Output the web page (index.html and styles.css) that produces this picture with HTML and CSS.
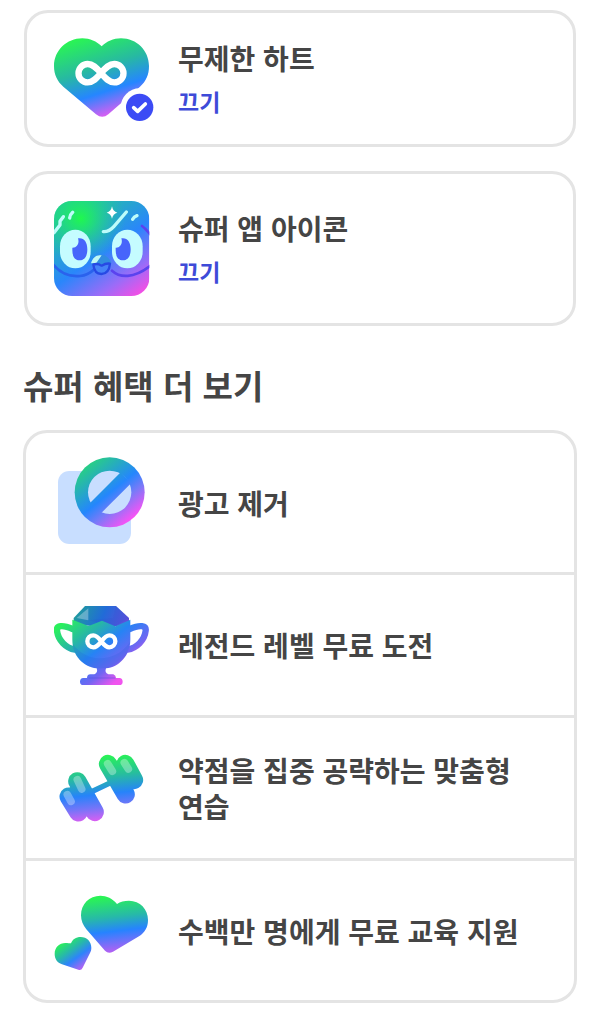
FILE: index.html
```html
<!DOCTYPE html>
<html lang="ko">
<head>
<meta charset="utf-8">
<meta name="viewport" content="width=device-width, initial-scale=1">
<title>슈퍼 혜택</title>
<link rel="stylesheet" href="styles.css">
</head>
<body>
<main class="page">
  <section class="card card--compact">
    <svg class="icon" width="100" height="91" viewBox="42 25 300 273" aria-hidden="true">
      <defs>
        <linearGradient id="heart" gradientUnits="userSpaceOnUse" x1="100" y1="50" x2="175" y2="285">
          <stop offset="0" stop-color="#2af356"/><stop offset=".4" stop-color="#27b9a2"/><stop offset=".7" stop-color="#2586ff"/><stop offset="1" stop-color="#e35cf2"/>
        </linearGradient>
      </defs>
      <path fill="url(#heart)" d="M185 65C170 50 150 41 127 41C80 41 42 78 42 124C42 150 52 170 70 186L168 269Q187 284 205 269L300 186C318 170 327 150 327 124C327 78 290 41 243 41C220 41 200 50 185 65Z"/>
      <path fill="none" stroke="#fff" stroke-width="19" d="M183 145C168 128 158 118 143 118A27.5 27.5 0 0 0 143 173C158 173 168 163 183 145C198 128 208 118 223 118A27.5 27.5 0 0 1 223 173C208 173 198 163 183 145Z"/>
      <circle cx="299" cy="248" r="57" fill="#fff"/>
      <circle cx="299" cy="248" r="41" fill="#3c4bf5"/>
      <path fill="none" stroke="#fff" stroke-width="11" stroke-linecap="round" stroke-linejoin="round" d="M281 249L293 260L316 238"/>
    </svg>
    <div class="card-body">
      <h2 class="title title--card">무제한 하트</h2>
      <button class="toggle" type="button">끄기</button>
    </div>
  </section>

  <section class="card">
    <svg class="icon" width="100" height="97" viewBox="42 30 300 291" aria-hidden="true">
      <defs>
        <linearGradient id="face" gradientUnits="userSpaceOnUse" x1="95" y1="45" x2="290" y2="330">
          <stop offset="0" stop-color="#22c99b"/><stop offset=".5" stop-color="#2a86fb"/><stop offset=".78" stop-color="#9a6cf8"/><stop offset="1" stop-color="#ff4be2"/>
        </linearGradient>
        <radialGradient id="glow" gradientUnits="userSpaceOnUse" cx="122" cy="85" r="135">
          <stop offset="0" stop-color="#1ff84e"/><stop offset=".3" stop-color="#20ee62" stop-opacity=".7"/><stop offset="1" stop-color="#22c99b" stop-opacity="0"/>
        </radialGradient>
        <clipPath id="tile"><rect x="42" y="33" width="286" height="285" rx="54"/></clipPath>
      </defs>
      <g clip-path="url(#tile)">
        <path fill="url(#face)" d="M42 33H328V318H42Z"/>
        <path fill="url(#glow)" d="M42 33H328V318H42Z"/>
        <g fill="none" stroke-width="8" stroke-linecap="round">
          <path stroke="#2a62ed" d="M38 222C60 250 88 261 120 258C140 256 152 248 160 240"/>
          <path stroke="#5b43ee" d="M216 242C240 264 280 266 330 228M306 108C316 115 322 123 330 132"/>
        </g>
        <g fill="none" stroke="#bdfcfa" stroke-width="10" stroke-linecap="round" stroke-linejoin="round">
          <path d="M42 128L60 105L60 94L70 80M89 84Q90 74 98 67M190 125C204 126 214 118 222 109L259 66M278 88Q282 80 291 77"/>
        </g>
        <path fill="#fff" d="M216 49Q219 65 232 68Q219 71 216 86Q213 71 200 68Q213 65 216 49Z"/>
        <rect x="60" y="119" width="92" height="116" rx="46" ry="50" fill="#c5fcff"/>
        <rect x="216" y="119" width="92" height="116" rx="46" ry="50" fill="#c5fcff"/>
        <path fill="#4765fb" d="M114 145C132 142 142 156 142 178C142 198 134 211 119 211C104 211 97 199 97 181V173C111 174 119 160 114 145Z"/>
        <path fill="#4765fb" d="M244 145C262 142 272 156 272 178C272 198 264 211 249 211C234 211 227 199 227 181V173C241 174 249 160 244 145Z"/>
        <path fill="#318de0" d="M153 222C158 202 170 193 184 194C200 195 210 206 214 219Q184 230 153 222Z"/>
        <path fill="#bff8f5" d="M153 220C158 202 169 193 185 196L169 219Q161 218 153 220Z"/>
        <path fill="#4583f8" stroke="#2749e4" stroke-width="7" stroke-linejoin="round" d="M160 224Q172 219 185 227Q198 219 210 221C208 242 199 252 184 252C171 252 162 242 160 224Z"/>
      </g>
    </svg>
    <div class="card-body">
      <h2 class="title title--card">슈퍼 앱 아이콘</h2>
      <button class="toggle" type="button">끄기</button>
    </div>
  </section>

  <h1 class="heading">슈퍼 혜택 더 보기</h1>

  <ul class="benefits">
    <li class="benefit">
      <svg class="icon" width="100" height="99" viewBox="42 24 300 297" aria-hidden="true">
        <defs>
          <linearGradient id="ban" gradientUnits="userSpaceOnUse" x1="138" y1="65" x2="270" y2="230">
            <stop offset="0" stop-color="#28ce86"/><stop offset=".5" stop-color="#2486fd"/><stop offset=".7" stop-color="#787af8"/><stop offset="1" stop-color="#ff50f5"/>
          </linearGradient>
        </defs>
        <rect x="54" y="78" width="219" height="219" rx="34" fill="#c8deff"/>
        <circle cx="209" cy="142" r="105" fill="url(#ban)"/>
        <circle cx="209" cy="142" r="65" fill="#c8deff"/>
        <path fill="none" stroke="url(#ban)" stroke-width="45" d="M258 98L160 196"/>
      </svg>
      <h2 class="title">광고 제거</h2>
    </li>
    <li class="benefit">
      <svg class="icon" width="100" height="100" viewBox="42 15 300 300" aria-hidden="true">
        <defs>
          <linearGradient id="cup" gradientUnits="userSpaceOnUse" x1="70" y1="100" x2="215" y2="285">
            <stop offset="0" stop-color="#2af05c"/><stop offset=".28" stop-color="#27b9a2"/><stop offset=".54" stop-color="#2683f5"/><stop offset=".8" stop-color="#7166f2"/><stop offset="1" stop-color="#f054ee"/>
          </linearGradient>
          <linearGradient id="gem" gradientUnits="userSpaceOnUse" x1="105" y1="50" x2="250" y2="115">
            <stop offset="0" stop-color="#1fa198"/><stop offset=".55" stop-color="#216bd8"/><stop offset="1" stop-color="#5d50dc"/>
          </linearGradient>
        </defs>
        <path fill="url(#gem)" d="M135 48H228L267 84V105L185 112L101 102V84Z"/>
        <path fill="#fff" opacity=".3" d="M110 84L145 55V91Z"/>
        <path fill="#3151d0" opacity=".2" d="M145 91L225 108L267 84L228 48L219 84Z"/>
        <path fill="none" stroke="url(#cup)" stroke-width="19" stroke-linecap="round" d="M98 117C66 103 49 107 51 122C54 151 78 174 105 179M269 117C301 103 319 107 317 122C314 151 290 174 262 179"/>
        <path fill="url(#cup)" d="M97 89L146 108L186 92L226 109L271 89V149C271 197 237 231 198 235Q193 248 205 253H220Q228 256 228 264H238Q248 265 248 275Q248 285 238 285H130Q120 285 120 275Q120 265 130 264H141Q141 254 151 253H163Q175 247 170 235C130 230 97 197 97 149Z"/>
        <path fill="#1e62db" opacity=".22" d="M98 161C142 223 228 218 270 156C267 199 234 230 198 235H170C131 230 101 199 98 161Z"/>
        <path fill="none" stroke="#4f4ede" stroke-width="3" opacity=".5" d="M146 264H226"/>
        <path fill="none" stroke="#fff" stroke-width="13" d="M184 154C175 142 169 136 160 136A18 18 0 0 0 160 172C169 172 175 166 184 154C193 142 199 136 208 136A18 18 0 0 1 208 172C199 172 193 166 184 154Z"/>
      </svg>
      <h2 class="title">레전드 레벨 무료 도전</h2>
    </li>
    <li class="benefit">
      <svg class="icon" width="100" height="100" viewBox="42 -6 300 300" aria-hidden="true">
        <defs>
          <linearGradient id="weight" gradientUnits="userSpaceOnUse" x1="170" y1="50" x2="190" y2="245">
            <stop offset="0" stop-color="#2af356"/><stop offset=".3" stop-color="#27bf9b"/><stop offset=".58" stop-color="#2683fa"/><stop offset=".78" stop-color="#7575f8"/><stop offset="1" stop-color="#e45cf2"/>
          </linearGradient>
        </defs>
        <g fill="none" stroke="url(#weight)" stroke-linecap="round">
          <path stroke-width="16" d="M140 162L225 122"/>
          <path stroke-width="55" d="M86 170L115 217M112 124L164 216M204 72L257 163M256 72L282 120"/>
          <path stroke-width="36" d="M102 155L135 212M228 80L264 138"/>
        </g>
        <path fill="none" stroke="#fff" stroke-width="23" stroke-linecap="round" opacity=".32" d="M82 164L93 184M112 119L125 147M203 71L217 94M253 68L265 87"/>
      </svg>
      <h2 class="title">약점을 집중 공략하는 맞춤형 연습</h2>
    </li>
    <li class="benefit">
      <svg class="icon" width="100" height="99" viewBox="42 3 300 297" aria-hidden="true">
        <defs>
          <linearGradient id="love" gradientUnits="userSpaceOnUse" x1="195" y1="52" x2="215" y2="225">
            <stop offset="0" stop-color="#2af356"/><stop offset=".35" stop-color="#27b9a8"/><stop offset=".6" stop-color="#2683ff"/><stop offset="1" stop-color="#c65cf2"/>
          </linearGradient>
          <linearGradient id="love-small" gradientUnits="userSpaceOnUse" x1="68" y1="190" x2="128" y2="273">
            <stop offset="0" stop-color="#2aeb60"/><stop offset=".3" stop-color="#27b9a8"/><stop offset=".58" stop-color="#2e83fb"/><stop offset="1" stop-color="#cd5cf2"/>
          </linearGradient>
        </defs>
        <path fill="url(#love)" d="M231 72C218 55 200 47 181 47C148 47 123 72 123 106C123 122 129 136 139 148L195 212Q205 223 219 215L297 169C314 158 324 142 324 120C324 87 300 62 267 62C253 62 241 65 231 72Z"/>
        <path fill="url(#love-small)" d="M93 190C97 178 108 171 122 171C141 171 154 185 154 203C154 209 153 214 150 219L128 263Q124 272 115 269L66 253C52 248 44 237 44 222C44 202 58 189 76 189C83 189 89 190 93 190Z"/>
      </svg>
      <h2 class="title">수백만 명에게 무료 교육 지원</h2>
    </li>
  </ul>
</main>
</body>
</html>
```
FILE: styles.css
```css
* {
  box-sizing: border-box;
}

body {
  margin: 0;
  background: #fff;
  color: #454545;
  font-family: "Noto Sans CJK KR", sans-serif;
  word-break: keep-all;
}

.page {
  padding: 10px 23px 16px;
}

.card {
  display: flex;
  align-items: center;
  gap: 24px;
  margin: 0 1px 24px;
  padding: 26px 27px;
  border: 3px solid #e4e4e4;
  border-radius: 24px;
}

.card--compact {
  padding-top: 20px;
  padding-bottom: 20px;
}

.icon {
  display: block;
  flex: none;
}

.card-body {
  display: flex;
  flex-direction: column;
  align-items: flex-start;
}

.title {
  margin: 0;
  font-size: 28px;
  font-weight: 700;
  line-height: 36px;
}

.title--card {
  line-height: 44px;
}

.toggle {
  padding: 0;
  border: 0;
  background: none;
  color: #3e4bd8;
  font-family: inherit;
  font-size: 23px;
  font-weight: 700;
  line-height: 42px;
  cursor: pointer;
}

.heading {
  margin: 34px 0 20px;
  font-size: 33px;
  font-weight: 700;
  line-height: 50px;
}

.benefits {
  margin: 0;
  padding: 0;
  border: 3px solid #e4e4e4;
  border-radius: 24px;
  list-style: none;
}

.benefit {
  display: flex;
  align-items: center;
  gap: 24px;
  padding: 20px 28px;
}

.benefit + .benefit {
  border-top: 3px solid #e4e4e4;
}
```
